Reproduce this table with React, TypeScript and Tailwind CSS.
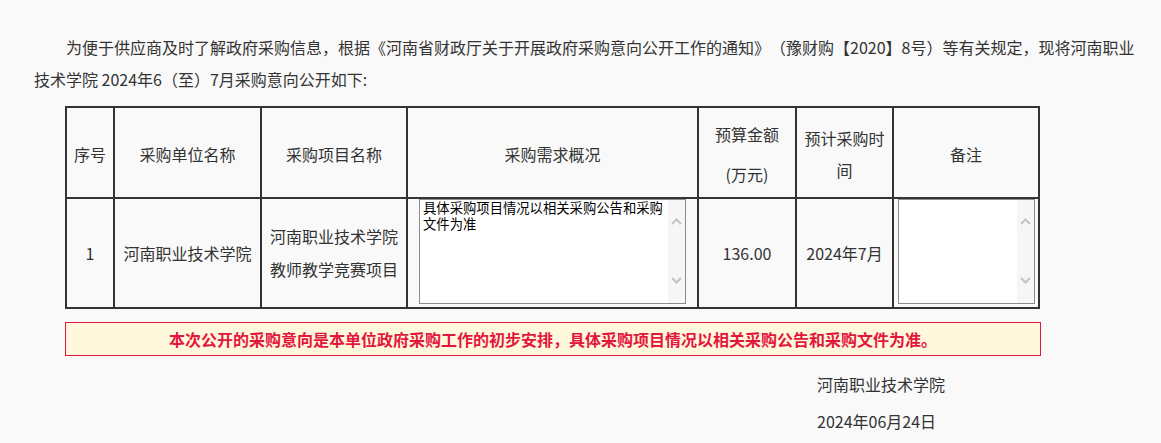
import React from "react";

function Chevron({ up }: { up?: boolean }) {
  return (
    <svg width="11" height="7" viewBox="0 0 11 7" fill="none">
      <path
        d={up ? "M1 6 L5.5 1.5 L10 6" : "M1 1 L5.5 5.5 L10 1"}
        stroke="#c4c4c4"
        strokeWidth="2"
      />
    </svg>
  );
}

function Scrollbar() {
  return (
    <div className="flex w-[17px] shrink-0 flex-col items-center justify-between bg-[#f6f6f6] pb-[19px] pt-[18px]">
      <Chevron up />
      <Chevron />
    </div>
  );
}

export default function App() {
  return (
    <div className="min-h-[443px] bg-[#f9f9f9] pl-[34px] pr-[17px] pt-[31px] font-['Noto_Sans_CJK_SC',sans-serif] text-[16px] text-[#333] [text-spacing-trim:space-all]">
      <p className="indent-[32px] leading-[32px]">
        为便于供应商及时了解政府采购信息，根据《河南省财政厅关于开展政府采购意向公开工作的通知》（豫财购【2020】8号）等有关规定，现将河南职业技术学院 2024年6（至）7月采购意向公开如下:
      </p>

      <div className="ml-[31px] mt-[11px] grid w-[975px] grid-cols-[46px_145px_144px_289px_96px_95px_144px] grid-rows-[89px_108px] gap-[2px] bg-[#333] p-[2px]">
        <div className="flex items-center justify-center bg-[#f9f9f9] pt-[3px]">序号</div>
        <div className="flex items-center justify-center bg-[#f9f9f9] pt-[3px]">采购单位名称</div>
        <div className="flex items-center justify-center bg-[#f9f9f9] pt-[3px]">采购项目名称</div>
        <div className="flex items-center justify-center bg-[#f9f9f9] pt-[3px]">采购需求概况</div>
        <div className="flex flex-col items-center justify-center bg-[#f9f9f9] pt-[3px] leading-[40px]">
          <div>预算金额</div>
          <div>(万元)</div>
        </div>
        <div className="flex items-center justify-center bg-[#f9f9f9] pt-[3px] text-center leading-[32px]">
          预计采购时间
        </div>
        <div className="flex items-center justify-center bg-[#f9f9f9] pt-[3px]">备注</div>

        <div className="flex items-center justify-center bg-[#f9f9f9]">1</div>
        <div className="flex items-center justify-center bg-[#f9f9f9]">河南职业技术学院</div>
        <div className="flex items-center justify-center bg-[#f9f9f9] px-[7px] text-center leading-[33px]">
          河南职业技术学院教师教学竞赛项目
        </div>
        <div className="flex items-start justify-center bg-[#f9f9f9]">
          <div className="flex h-[105px] w-[267px] border border-[#8c8c8c] bg-white">
            <div className="flex-1 pl-[3px] pr-[2px] text-[13.33px] leading-[16px] text-black">
              具体采购项目情况以相关采购公告和采购文件为准
            </div>
            <Scrollbar />
          </div>
        </div>
        <div className="flex items-center justify-center bg-[#f9f9f9]">136.00</div>
        <div className="flex items-center justify-center bg-[#f9f9f9]">2024年7月</div>
        <div className="flex items-start justify-center bg-[#f9f9f9]">
          <div className="flex h-[105px] w-[137px] border border-[#8c8c8c] bg-white">
            <div className="flex-1" />
            <Scrollbar />
          </div>
        </div>
      </div>

      <div className="ml-[31px] mt-[13px] h-[34px] w-[976px] border border-[#e3173e] bg-[#fff8dc] text-center font-bold leading-[32px] text-[#e3173e]">
        本次公开的采购意向是本单位政府采购工作的初步安排，具体采购项目情况以相关采购公告和采购文件为准。
      </div>

      <div className="ml-[783px] mt-[10px] leading-[37px]">
        <div>河南职业技术学院</div>
        <div>2024年06月24日</div>
      </div>
    </div>
  );
}
